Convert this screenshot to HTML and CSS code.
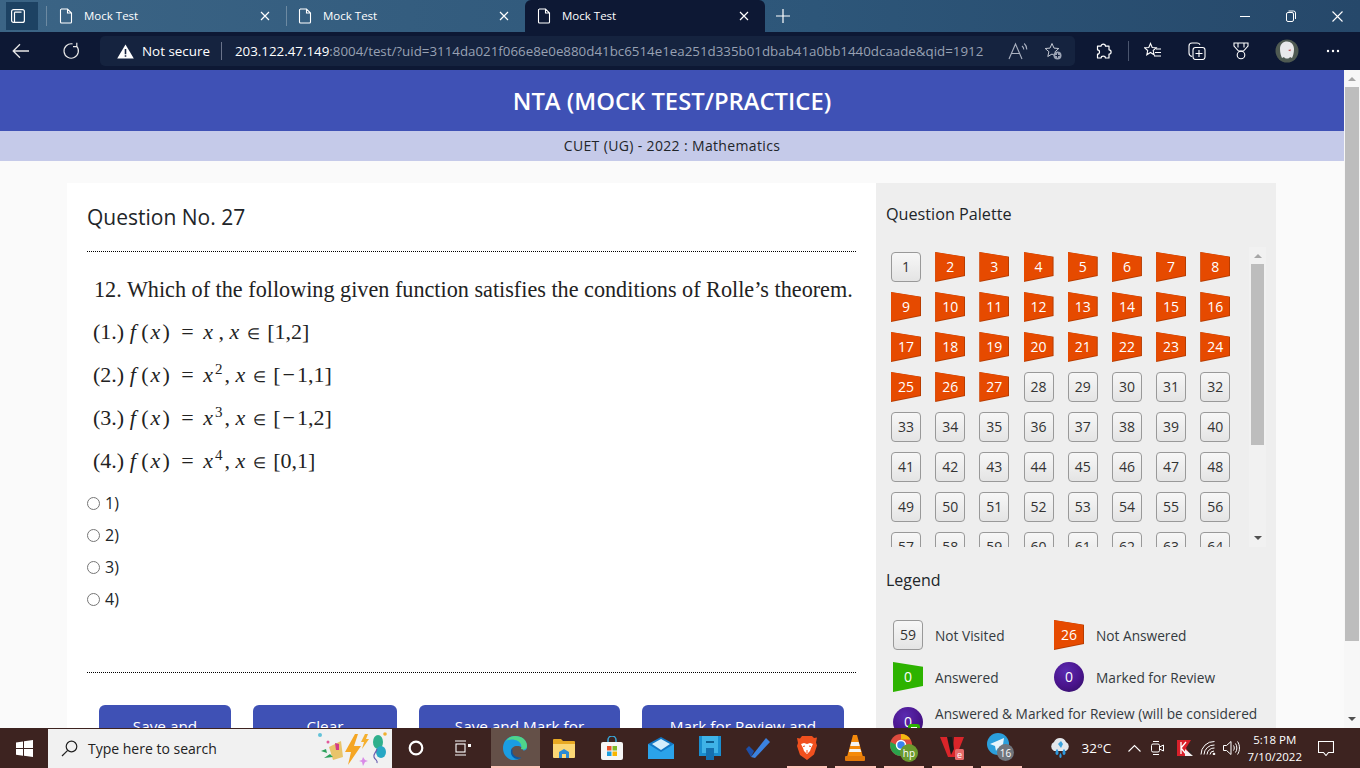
FILE: index.html
```html
<!DOCTYPE html>
<html>
<head>
  <meta charset="utf-8">
  <title>Mock Test</title>
  <link rel="stylesheet" href="styles.css">
</head>
<body>
  <div class="browser">
    <!-- Tab strip -->
    <div class="tabstrip">
      <div class="tab-toggle">
        <svg width="16" height="16" viewBox="0 0 16 16" fill="none" stroke="#fff" stroke-width="1.2"><rect x="1.6" y="1.6" width="12.8" height="12.8" rx="2"/><path d="M4.5 4.2h7M4.5 4.2v9.8"/></svg>
      </div>
      <span class="tab-sep"></span>
      <div class="tab">
        <svg class="tab-icon" width="14" height="16" viewBox="0 0 14 16" fill="none" stroke="#fff" stroke-width="1.1"><path d="M2 1h6.5L12.5 5v9a1 1 0 0 1-1 1h-9a1 1 0 0 1-1-1V2a1 1 0 0 1 1-1zM8.5 1v4h4"/></svg>
        <span class="tab-title">Mock Test</span>
        <svg class="tab-close" width="10" height="10" viewBox="0 0 10 10" stroke="#fff" stroke-width="1.2"><path d="M1 1l8 8M9 1l-8 8"/></svg>
      </div>
      <div class="tab tab-sepleft">
        <svg class="tab-icon" width="14" height="16" viewBox="0 0 14 16" fill="none" stroke="#fff" stroke-width="1.1"><path d="M2 1h6.5L12.5 5v9a1 1 0 0 1-1 1h-9a1 1 0 0 1-1-1V2a1 1 0 0 1 1-1zM8.5 1v4h4"/></svg>
        <span class="tab-title">Mock Test</span>
        <svg class="tab-close" width="10" height="10" viewBox="0 0 10 10" stroke="#fff" stroke-width="1.2"><path d="M1 1l8 8M9 1l-8 8"/></svg>
      </div>
      <div class="tab tab-active">
        <svg class="tab-icon" width="14" height="16" viewBox="0 0 14 16" fill="none" stroke="#fff" stroke-width="1.1"><path d="M2 1h6.5L12.5 5v9a1 1 0 0 1-1 1h-9a1 1 0 0 1-1-1V2a1 1 0 0 1 1-1zM8.5 1v4h4"/></svg>
        <span class="tab-title">Mock Test</span>
        <svg class="tab-close" width="10" height="10" viewBox="0 0 10 10" stroke="#fff" stroke-width="1.2"><path d="M1 1l8 8M9 1l-8 8"/></svg>
      </div>
      <svg class="tab-new" width="14" height="14" viewBox="0 0 14 14" stroke="#fff" stroke-width="1.2"><path d="M7 0v14M0 7h14"/></svg>
      <div class="window-btns">
        <div class="window-btn"><svg width="10" height="10" viewBox="0 0 10 10" stroke="#fff"><path d="M0 5.5h10"/></svg></div>
        <div class="window-btn"><svg width="10" height="12" viewBox="0 0 10 12" fill="none" stroke="#fff"><rect x="0.5" y="2.5" width="7" height="9" rx="1.5"/><path d="M2.5 1h5a2 2 0 0 1 2 2v6"/></svg></div>
        <div class="window-btn"><svg width="11" height="11" viewBox="0 0 11 11" stroke="#fff" stroke-width="1.1"><path d="M0.5 0.5l10 10M10.5 0.5l-10 10"/></svg></div>
      </div>
    </div>

    <!-- Toolbar -->
    <div class="toolbar">
      <div class="nav-btn">
        <svg width="18" height="16" viewBox="0 0 18 16" fill="none" stroke="#e8e8e8" stroke-width="1.3"><path d="M17 8H1.5M8 1.2L1.2 8 8 14.8"/></svg>
      </div>
      <div class="nav-btn">
        <svg width="18" height="18" viewBox="0 0 18 18" fill="none" stroke="#e8e8e8" stroke-width="1.2"><path d="M14.6 4.2A7.2 7.2 0 1 1 10.5 1.9M14.8 0.8v3.8h-3.8"/></svg>
      </div>
      <div class="address">
        <svg class="warn-icon" width="17" height="15" viewBox="0 0 17 15"><path d="M8.5 0.5L16.8 14.6H0.2z" fill="#fff"/><path d="M7.7 5h1.6v5.2H7.7zM7.7 11.2h1.6v1.6H7.7z" fill="#14213f"/></svg>
        <span class="not-secure">Not secure</span>
        <span class="addr-sep"></span>
        <span class="url"><b>203.122.47.149</b>:8004/test/?uid=3114da021f066e8e0e880d41bc6514e1ea251d335b01dbab41a0bb1440dcaade&amp;qid=1912</span>
        <svg class="addr-read" width="20" height="18" viewBox="0 0 20 18" fill="none" stroke="#aab1c0" stroke-width="1.1"><path d="M1 17L7.500 2 14 17M3.500 11.500h8M14 4c1.200 1 1.800 2.200 1.800 3.600M16.200 1.500c1.700 1.500 2.600 3.500 2.600 6"/></svg>
        <svg class="addr-fav" width="18" height="18" viewBox="0 0 18 18"><path d="M8 1.5l2 4.6 4.8.4-3.7 3.2 1.1 4.8L8 12l-4.2 2.5 1.1-4.8L1.2 6.5 6 6.100z" fill="none" stroke="#c5cad4" stroke-width="1"/><circle cx="13.500" cy="13.500" r="4" fill="#9ba3b4"/><path d="M13.500 11.300v4.400M11.300 13.500h4.400" stroke="#14213f"/></svg>
      </div>
      <div class="tool-icons">
        <svg class="ti-ext" width="17" height="17" viewBox="0 0 17 17" fill="none" stroke="#fff" stroke-width="1.2"><path d="M6 3.200c0-2.800 4.500-2.800 4.500 0h3.500v3.600c2.800 0 2.800 4.400 0 4.400V15h-3.600c0-2.500-4.300-2.500-4.300 0H2.500v-3.800c2.700 0 2.700-4.400 0-4.400V3.200z" stroke-linejoin="round"/></svg>
        <span class="tool-sep"></span>
        <svg class="ti-star" width="18" height="18" viewBox="0 0 18 18" fill="none" stroke="#fff" stroke-width="1.1"><path d="M6.500 1.500l1.700 4 4 .3-3 2.700.9 4.300-3.600-2.300-3.700 2.300.9-4.300-3-2.700 4.100-.3zM12 7h5M11 10.500h6M10 14h7"/></svg>
        <svg class="ti-coll" width="18" height="18" viewBox="0 0 18 18" fill="none" stroke="#fff" stroke-width="1.1"><path d="M4 14.500C2 14 1 13 1 11V4c0-2 1-3 3-3h5c1.500 0 2.500.6 3 1.800"/><rect x="5" y="5.500" width="12" height="12" rx="2.500"/><path d="M11 8v7M7.500 11.500h7"/></svg>
        <svg class="ti-medal" width="16" height="18" viewBox="0 0 16 18" fill="none" stroke="#fff" stroke-width="1.1"><path d="M1 1h14v3l-4.500 5h-5L1 4zM5 1v4.500M11 1v4.500"/><circle cx="8" cy="13" r="3.800"/></svg>
        <div class="avatar">
          <svg width="24" height="24" viewBox="0 0 24 24"><circle cx="12" cy="12" r="11.500" fill="#4f5a52"/><path d="M5 10c0-5 3-7.500 7-7.500s7 3 7 7.500c0 4-1 7-2 9l-2-1c-1 2-5 2-6 0l-2 1c-1-2-2-5-2-9z" fill="#e8e8ea"/><path d="M13 11l3-.6-.8 1.800z" fill="#b5383f"/></svg>
        </div>
        <svg class="ti-more" width="14" height="4" viewBox="0 0 14 4" fill="#fff"><circle cx="2" cy="2" r="1.200"/><circle cx="7" cy="2" r="1.200"/><circle cx="12" cy="2" r="1.200"/></svg>
      </div>
    </div>

    <!-- Page -->
    <div class="page">
      <div class="page-main">
        <div class="site-header">NTA (MOCK TEST/PRACTICE)</div>
        <div class="site-sub">CUET (UG) - 2022 : Mathematics</div>

        <div class="exam">
          <div class="question-panel">
            <div class="question-title">Question No. 27</div>
            <div class="question-body">
              <div class="q-line q-lead">12. Which of the following given function satisfies the conditions of Rolle’s theorem.</div>
              <div class="q-line">(1.) <i>f</i> <span class="arg">(<i>x</i>)</span> <span class="eq">=</span> <i>x</i> , <i>x</i> <span class="in">∈</span> [1,2]</div>
              <div class="q-line">(2.) <i>f</i> <span class="arg">(<i>x</i>)</span> <span class="eq">=</span> <i>x</i><sup>2</sup>, <i>x</i> <span class="in">∈</span> [<span class="minus">−</span>1,1]</div>
              <div class="q-line">(3.) <i>f</i> <span class="arg">(<i>x</i>)</span> <span class="eq">=</span> <i>x</i><sup>3</sup>, <i>x</i> <span class="in">∈</span> [<span class="minus">−</span>1,2]</div>
              <div class="q-line">(4.) <i>f</i> <span class="arg">(<i>x</i>)</span> <span class="eq">=</span> <i>x</i><sup>4</sup>, <i>x</i> <span class="in">∈</span> [0,1]</div>
            </div>
            <div class="options">
              <label class="option"><input type="radio" name="answer"> 1)</label>
              <label class="option"><input type="radio" name="answer"> 2)</label>
              <label class="option"><input type="radio" name="answer"> 3)</label>
              <label class="option"><input type="radio" name="answer"> 4)</label>
            </div>
            <div class="actions">
              <button class="action-btn btn-save">Save and Next</button>
              <button class="action-btn btn-clear">Clear Response</button>
              <button class="action-btn btn-mark">Save and Mark for Review</button>
              <button class="action-btn btn-review">Mark for Review and Next</button>
            </div>
          </div>

          <div class="palette-panel">
            <div class="palette-title">Question Palette</div>
            <div class="palette-box">
              <div class="palette-grid">
                <span class="qb">1</span>
                <span class="qb qb-red">2</span><span class="qb qb-red">3</span><span class="qb qb-red">4</span><span class="qb qb-red">5</span><span class="qb qb-red">6</span><span class="qb qb-red">7</span><span class="qb qb-red">8</span>
                <span class="qb qb-red">9</span><span class="qb qb-red">10</span><span class="qb qb-red">11</span><span class="qb qb-red">12</span><span class="qb qb-red">13</span><span class="qb qb-red">14</span><span class="qb qb-red">15</span><span class="qb qb-red">16</span>
                <span class="qb qb-red">17</span><span class="qb qb-red">18</span><span class="qb qb-red">19</span><span class="qb qb-red">20</span><span class="qb qb-red">21</span><span class="qb qb-red">22</span><span class="qb qb-red">23</span><span class="qb qb-red">24</span>
                <span class="qb qb-red">25</span><span class="qb qb-red">26</span><span class="qb qb-red">27</span><span class="qb">28</span><span class="qb">29</span><span class="qb">30</span><span class="qb">31</span><span class="qb">32</span>
                <span class="qb">33</span><span class="qb">34</span><span class="qb">35</span><span class="qb">36</span><span class="qb">37</span><span class="qb">38</span><span class="qb">39</span><span class="qb">40</span>
                <span class="qb">41</span><span class="qb">42</span><span class="qb">43</span><span class="qb">44</span><span class="qb">45</span><span class="qb">46</span><span class="qb">47</span><span class="qb">48</span>
                <span class="qb">49</span><span class="qb">50</span><span class="qb">51</span><span class="qb">52</span><span class="qb">53</span><span class="qb">54</span><span class="qb">55</span><span class="qb">56</span>
                <span class="qb">57</span><span class="qb">58</span><span class="qb">59</span><span class="qb">60</span><span class="qb">61</span><span class="qb">62</span><span class="qb">63</span><span class="qb">64</span>
              </div>
              <div class="scrollbar palette-scroll">
                <span class="arrow-up"></span>
                <div class="scroll-track"><div class="palette-thumb"></div></div>
                <span class="arrow-down"></span>
              </div>
            </div>

            <div class="legend-title">Legend</div>
            <div class="legend">
              <div class="legend-item"><span class="qb">59</span><span>Not Visited</span></div>
              <div class="legend-item"><span class="qb qb-red">26</span><span>Not Answered</span></div>
              <div class="legend-item"><span class="qb qb-green">0</span><span>Answered</span></div>
              <div class="legend-item"><span class="qb qb-purple">0</span><span>Marked for Review</span></div>
              <div class="legend-item legend-wide">
                <span class="qb qb-purple qb-tick">0</span>
                <span>Answered &amp; Marked for Review (will be considered for evaluation)</span>
              </div>
            </div>
          </div>
        </div>
      </div>
      <div class="scrollbar page-scroll">
        <span class="arrow-up"></span>
        <div class="scroll-track"><div class="page-thumb"></div></div>
        <span class="arrow-down"></span>
      </div>
    </div>

    <!-- Windows taskbar -->
    <div class="taskbar">
      <div class="start">
        <svg width="17" height="17" viewBox="0 0 17 17" fill="#fff"><path d="M0 2.400l7-1v6.700H0zM8 1.300l9-1.300v8.100H8zM0 9h7v6.700l-7-1zM8 9h9v8l-9-1.300z"/></svg>
      </div>
      <div class="search">
        <svg width="17" height="17" viewBox="0 0 17 17" fill="none" stroke="#222" stroke-width="1.200"><circle cx="10.500" cy="6.500" r="5.300"/><path d="M6.700 10.300L1 16"/></svg>
        <span class="search-text">Type here to search</span>
        <svg class="search-art" width="70" height="36" viewBox="0 0 70 36">
          <path d="M11 16l12-6 2 16-10 3z" fill="#e9c46a"/>
          <path d="M9 22l-6-2 5-2zM15 26l-9 1 6-4z" fill="#2aa05a"/>
          <path d="M17 12l4 1 0 6-3 0z" fill="#d23a8a"/>
          <circle cx="2" cy="4" r="2" fill="#62c2d8"/><circle cx="10" cy="11" r="1.500" fill="#e25a9a"/>
          <path d="M37 3L27 21h6l-3 13 13-19h-7l4-12z" fill="#f5a623"/>
          <path d="M47 3l-4 8h3l-2 7 7-10h-3l2-5z" fill="#f5b02e"/>
          <ellipse cx="60" cy="11" rx="5" ry="7" fill="#2fb08c"/>
          <ellipse cx="63" cy="21" rx="5" ry="6" fill="#27a7c4"/>
          <path d="M59 18c-1 4-4 5-3 8s4 3 3 6" fill="none" stroke="#6a5fb0" stroke-width="1.200"/>
          <circle cx="67" cy="3" r="1.800" fill="#f0b030"/>
          <path d="M45 26l2 3 3 1-3 1-2 4-1-4-3-1 3-1z" fill="#d98be8"/>
        </svg>
      </div>
      <div class="task-btn task-cortana"><svg width="16" height="16" viewBox="0 0 16 16" fill="none" stroke="#fff" stroke-width="2.200"><circle cx="8" cy="8" r="6.300"/></svg></div>
      <div class="task-btn task-view"><svg width="16" height="16" viewBox="0 0 16 16" fill="none" stroke="#fff" stroke-width="1.100"><path d="M0 1h11M0 15h11"/><rect x="1" y="4" width="9" height="8"/><rect x="13" y="4" width="3" height="3" fill="#fff" stroke="none"/></svg></div>
      <div class="app app-edge app-on">
        <svg width="26" height="26" viewBox="0 0 26 26"><path d="M13 1C6 1 1 6 1 13c0 7 5 12 11 12 3 0 5-1 7-2-5 1-10-2-10-7 0-3 3-5 6-5 4 0 6 2 6 4 0 1 4 1 4-3C25 5 20 1 13 1z" fill="#1b9de2"/><path d="M13 1C9 1 6 3 4 6c3-2 8-2 12 0 3 2 4 5 3 8 3 1 6 0 6-3C25 5 20 1 13 1z" fill="#4fd58a"/><path d="M9 15c-1 6 4 11 10 8 1-1-4 0-6-2-3-2-3-5-2-7z" fill="#0c59a4"/></svg>
      </div>
      <div class="app">
        <svg width="22" height="20" viewBox="0 0 22 20"><path d="M0 2a1 1 0 0 1 1-1h7l2 2h11a1 1 0 0 1 1 1v15H0z" fill="#e8a923"/><path d="M0 6h22v13a1 1 0 0 1-1 1H1a1 1 0 0 1-1-1z" fill="#fbd775"/><path d="M6 20v-6l5-3 5 3v6h-3v-4H9v4z" fill="#2a8ad4"/></svg>
      </div>
      <div class="app">
        <svg width="22" height="24" viewBox="0 0 22 24"><path d="M7 7V4a4 4 0 0 1 8 0v3" fill="none" stroke="#39a6d8" stroke-width="1.500"/><rect x="0" y="6" width="22" height="18" rx="2" fill="#f6f6f6"/><rect x="6" y="10" width="4.500" height="4.500" fill="#e8502a"/><rect x="11.500" y="10" width="4.500" height="4.500" fill="#7fba28"/><rect x="6" y="15.500" width="4.500" height="4.500" fill="#1c9fe0"/><rect x="11.500" y="15.500" width="4.500" height="4.500" fill="#f8b600"/></svg>
      </div>
      <div class="app">
        <svg width="26" height="22" viewBox="0 0 26 22"><path d="M13 0L0 7v15h26V7z" fill="#1277c4"/><path d="M0 7l13 8 13-8v15H0z" fill="#2ba3ea"/><path d="M4 7l9-5 9 5-9 6z" fill="#d4eefc"/></svg>
      </div>
      <div class="app">
        <svg width="22" height="28" viewBox="0 0 22 28"><rect x="0" y="2" width="22" height="20" fill="#1a8ed0"/><rect x="3" y="2" width="16" height="17" fill="#3fb3e8"/><rect x="7" y="7" width="8" height="2" fill="#0f5f92"/><path d="M7 14h8v12H7z" fill="#1570b0"/></svg>
      </div>
      <div class="app">
        <svg width="24" height="20" viewBox="0 0 24 20"><path d="M0 11l3-3 5 5-3 6z" fill="#1d4fa8"/><path d="M5 19L20 0l4 4L9 20z" fill="#3b82e0"/></svg>
      </div>
      <div class="app app-on">
        <svg width="20" height="24" viewBox="0 0 20 24"><path d="M5 0h10l2 2 3-.500-1 5 1 3-3 9-7 5.500L3 19 0 10l1-3-1-5 3 .500z" fill="#f0501e"/><path d="M4 8l3-1 3 1 3-1 3 1-2 4-1 3-3 3-3-3-1-3z" fill="#fff"/><path d="M8 10l-2 .500M12 10l2 .500M10 14v3" stroke="#f0501e" stroke-width="1"/></svg>
      </div>
      <div class="app app-on">
        <svg width="20" height="26" viewBox="0 0 20 26"><path d="M8 0h4l6 22H2z" fill="#f58a0b"/><path d="M6.300 7h7.400l1 4H5.300zM4.700 14h10.600l1 3H3.900z" fill="#f4f4f4"/><rect x="0" y="21" width="20" height="5" rx="1" fill="#e37a0a"/></svg>
      </div>
      <div class="app app-on">
        <svg width="30" height="30" viewBox="0 0 30 30"><circle cx="12" cy="12" r="11" fill="#dd4b3e"/><path d="M12 1a11 11 0 0 1 9.500 5.500H12z" fill="#f2b90f"/><path d="M1.500 9A11 11 0 0 0 11 23l5-7z" fill="#2ba24c"/><circle cx="12" cy="12" r="4.500" fill="#3b82f0" stroke="#fff" stroke-width="1.500"/><circle cx="20" cy="20" r="9" fill="#6b9a2e"/><text x="20" y="24" class="svg-badge">hp</text></svg>
      </div>
      <div class="app app-on">
        <svg width="26" height="26" viewBox="0 0 26 26"><path d="M0 2h9l4 12 1-12h10l-8 20h-8z" fill="#d9252a"/><path d="M7 2h5l2 12-3 6z" fill="#1a1a1a"/><rect x="15" y="14" width="9" height="11" rx="1.500" fill="#e66a6a"/><text x="19.500" y="23" class="svg-badge-e">e</text></svg>
      </div>
      <div class="app app-on">
        <svg width="30" height="30" viewBox="0 0 30 30"><circle cx="12" cy="11" r="11" fill="#2b9fdc"/><path d="M4 11l14-6-2 13-4-3-2 3-1-5z" fill="#e8f4fb"/><circle cx="19.500" cy="19.500" r="8.500" fill="#70757c"/><text x="19.500" y="23.500" class="svg-count">16</text></svg>
      </div>
      <div class="tray">
        <svg class="tray-weather" width="24" height="22" viewBox="0 0 24 22"><path d="M6 14a5 5 0 0 1 0-9 6.500 6.500 0 0 1 12 0 5 5 0 0 1 0 9z" fill="#e4e8ec"/><path d="M10 7l3-3 2 3-2 4z" fill="#3aa3de"/><path d="M9 12c2 2 2 6 0 6s-2-4 0-6zM16 12c2 2 2 6 0 6s-2-4 0-6zM12.500 16c1.500 1.500 1.500 5 0 5s-1.500-3.500 0-5z" fill="#2e9be0"/></svg>
        <span class="tray-temp">32°C</span>
        <svg class="tray-up" width="13" height="8" viewBox="0 0 13 8" fill="none" stroke="#fff" stroke-width="1.100"><path d="M0.500 7.500l6-6 6 6"/></svg>
        <svg class="tray-meet" width="13" height="16" viewBox="0 0 13 16" fill="none" stroke="#fff" stroke-width="1"><path d="M2 1.500h6M2 14.500h6"/><rect x="0.500" y="4" width="8" height="8" rx="1.500"/><path d="M8.500 7l4-2v6l-4-2"/></svg>
        <svg class="tray-av" width="16" height="16" viewBox="0 0 16 16"><path d="M0 0h14l-5 8 5 8H0z" fill="#d9202a"/><path d="M4 2v12M4 8l5-6M4 8l5 6" stroke="#fff" stroke-width="1.300" fill="none"/><path d="M8 9l8 7H8z" fill="#f2f2f2"/><path d="M11 9.500l4 4" stroke="#222"/></svg>
        <svg class="tray-wifi" width="16" height="14" viewBox="0 0 16 14" fill="none" stroke="#fff" stroke-width="1"><path d="M1 13.500A13 13 0 0 1 14.500 0.500M4 13.500A10 10 0 0 1 14.500 4M7 13.500a7 7 0 0 1 7.500-6.500M10 13.500a4 4 0 0 1 4-3.500"/><circle cx="14" cy="13" r="0.900" fill="#fff"/></svg>
        <svg class="tray-vol" width="17" height="16" viewBox="0 0 17 16" fill="none" stroke="#fff" stroke-width="1"><path d="M0.500 5.500h3L8 1.500v13l-4.500-4h-3zM10.500 5.500c1 1.500 1 3.500 0 5M12.500 3.500c1.800 2.500 1.800 6.500 0 9M14.500 1.500c2.600 3.500 2.600 9.500 0 13"/></svg>
        <div class="tray-clock"><span>5:18 PM</span><span>7/10/2022</span></div>
        <svg class="tray-note" width="16" height="15" viewBox="0 0 16 15" fill="none" stroke="#fff" stroke-width="1.100"><path d="M0.500 0.500h15v11h-5l-2.500 3-2.500-3h-5z"/></svg>
      </div>
    </div>
  </div>
</body>
</html>
```

FILE: styles.css
```css
html, body {
  margin: 0;
  height: 100%;
  overflow: hidden;
}

body {
  font-family: "Open Sans", sans-serif;
  color: #212529;
}

.browser {
  display: flex;
  flex-direction: column;
  height: 768px;
}

/* Tab strip */
.tabstrip {
  height: 32px;
  flex: none;
  display: flex;
  align-items: flex-end;
  background: linear-gradient(90deg, #3b6485, #2d5679 60%, #26486a);
  color: #fff;
  font-size: 12px;
}

.tab-toggle {
  width: 32px;
  height: 28px;
  margin: 0 0 2px 6px;
  background: #1d4263;
  display: flex;
  align-items: center;
  justify-content: center;
  box-sizing: border-box;
  padding-right: 8px;
}

.tab-sep {
  width: 1px;
  height: 20px;
  margin: 0 0 6px 8px;
  background: #6d8aa2;
}

.tab {
  width: 239px;
  height: 32px;
  flex: none;
  display: flex;
  align-items: center;
  box-sizing: border-box;
  padding: 0 16px 0 12px;
  position: relative;
}

.tab-sepleft::before {
  content: "";
  position: absolute;
  left: 0;
  top: 6px;
  height: 20px;
  width: 1px;
  background: #6d8aa2;
}

.tab-active {
  width: 240px;
  background: #0d1834;
  border-radius: 6px 6px 0 0;
}

.tab-icon {
  margin-right: 11px;
}

.tab-title {
  flex: 1;
  font-size: 11.5px;
  padding-bottom: 2px;
}

.tab-new {
  margin: 0 0 9px 11px;
}

.window-btns {
  margin-left: auto;
  display: flex;
  align-self: stretch;
}

.window-btn {
  width: 46px;
  display: flex;
  align-items: center;
  justify-content: center;
}

/* Toolbar */
.toolbar {
  height: 38px;
  flex: none;
  display: flex;
  align-items: center;
  background: #0d1834;
  color: #fff;
}

.nav-btn {
  width: 36px;
  height: 30px;
  margin-left: 3px;
  margin-right: 15px;
  display: flex;
  align-items: center;
  justify-content: center;
}

.nav-btn + .nav-btn {
  margin: 0 12px 0 0;
  width: 34px;
}

.address {
  width: 975px;
  height: 30px;
  flex: none;
  display: flex;
  align-items: center;
  box-sizing: border-box;
  padding-left: 17px;
  background: #15233f;
  border-radius: 5px;
  font-size: 14px;
}

.not-secure {
  margin-left: 8px;
  font-size: 13.4px;
}

.addr-sep {
  width: 1px;
  height: 18px;
  margin: 0 13px 0 11px;
  background: #69738a;
}

.url {
  color: #98a1b3;
  font-size: 13.33px;
  white-space: nowrap;
}

.url b {
  color: #fff;
  font-weight: 400;
}

.addr-read {
  margin-left: auto;
}

.addr-fav {
  margin: 0 13px 0 16px;
}

.tool-icons {
  flex: 1;
  display: flex;
  align-items: center;
}

.ti-ext {
  margin-left: 20px;
}

.tool-sep {
  width: 1px;
  height: 20px;
  margin: 0 15px 0 16px;
  background: #4a556e;
}

.ti-coll {
  margin-left: 26px;
}

.ti-medal {
  margin-left: 27px;
}

.avatar {
  margin-left: 26px;
  height: 24px;
}

.ti-more {
  margin-left: 27px;
}

/* Page */
.page {
  flex: 1;
  min-height: 0;
  display: flex;
  background: #fafafa;
  overflow: hidden;
}

.page-main {
  flex: 1;
  min-width: 0;
  overflow: hidden;
}

.site-header {
  height: 61px;
  line-height: 62px;
  background: #3f51b5;
  color: #fff;
  text-align: center;
  font-size: 23.8px;
  font-weight: 600;
}

.site-sub {
  height: 30px;
  line-height: 30px;
  background: #c5cae9;
  text-align: center;
  font-size: 14px;
  letter-spacing: 0.35px;
}

.exam {
  display: flex;
  width: 1209px;
  margin: 22px 0 0 67px;
}

.question-panel {
  width: 809px;
  flex: none;
  box-sizing: border-box;
  padding: 0 20px;
  background: #fff;
}

.question-title {
  height: 68px;
  line-height: 68px;
  font-size: 21px;
  border-bottom: 1px dotted #000;
}

.question-body {
  margin-top: 16px;
  padding-left: 6px;
  font-family: "Liberation Serif", serif;
  font-size: 22px;
  color: #222;
}

.q-line {
  height: 43px;
  line-height: 42px;
  white-space: nowrap;
}

.q-lead {
  padding-left: 1px;
  font-size: 22.2px;
  line-height: 43px;
}

.q-line sup {
  font-size: 15px;
  line-height: 0;
  margin: 0 2px;
}

.arg {
  letter-spacing: 2px;
}

.eq {
  margin: 0 4px;
}

.in {
  font-size: 15px;
  margin: 0 2px;
}

.minus {
  margin: 0 2px;
}

.options {
  margin-top: 4px;
  padding-bottom: 57px;
  border-bottom: 1px dotted #000;
}

.option {
  display: flex;
  align-items: center;
  height: 32px;
  font-size: 16px;
  gap: 5px;
}

.option input {
  margin: 0;
}

.actions {
  display: flex;
  align-items: flex-start;
  gap: 22px;
  margin: 32px 0 0 12px;
}

.action-btn {
  padding: 10px 24px;
  border: 0;
  border-radius: 6px;
  background: #3f51b5;
  color: #fff;
  font: 15.3px/22px "Open Sans", sans-serif;
  flex: none;
}

.btn-save { width: 132px; }
.btn-clear { width: 144px; }
.btn-mark { width: 201px; padding-left: 20px; padding-right: 20px; }
.btn-review { width: 202px; padding-left: 20px; padding-right: 20px; }

/* Palette */
.palette-panel {
  flex: 1;
  background: #eee;
  padding-left: 10px;
  box-sizing: border-box;
  height: 600px;
}

.palette-title {
  height: 64px;
  line-height: 62px;
  font-size: 16.2px;
}

.palette-box {
  display: flex;
  width: 380px;
  height: 300px;
}

.palette-grid {
  width: 363px;
  flex: none;
  height: 300px;
  box-sizing: border-box;
  padding: 5px;
  overflow: hidden;
  display: grid;
  grid-template-columns: repeat(8, 30px);
  grid-auto-rows: 30px;
  column-gap: 14.2px;
  row-gap: 10px;
}

.qb {
  width: 30px;
  height: 30px;
  flex: none;
  box-sizing: border-box;
  display: flex;
  align-items: center;
  justify-content: center;
  padding-bottom: 1px;
  font-size: 14px;
  color: #333;
  border: 1px solid #999;
  border-radius: 4px;
  background: linear-gradient(#f7f7f7, #e4e4e4);
}

/* flag shape: dark clip behind, orange clip inset 1px gives the edge */
.qb-red {
  border: 0;
  border-radius: 0;
  color: #fff;
  background: #b83c00;
  clip-path: polygon(0 0, 100% 16%, 100% 80%, 0 100%);
  position: relative;
}

.qb-red::before {
  content: "";
  position: absolute;
  inset: 0 1px 1px 0;
  z-index: -1;
  background: #e64a00;
  clip-path: polygon(0 0, 100% 16%, 100% 80%, 0 100%);
}

.qb-green {
  border: 0;
  border-radius: 0;
  color: #fff;
  background: #2db300;
  clip-path: polygon(0 0, 100% 16%, 100% 80%, 0 100%);
}

.qb-purple {
  border: 0;
  border-radius: 50%;
  color: #fff;
  background: radial-gradient(circle at 40% 30%, #5a2ab0, #4a148c 55%, #2c0e5e);
}

.qb-tick {
  position: relative;
}

.qb-tick::after {
  content: "";
  position: absolute;
  right: 3px;
  bottom: 3px;
  width: 12px;
  height: 10px;
  background: #fff;
  border: 3px solid #2db300;
  border-radius: 3px;
  box-sizing: border-box;
}

/* Fake scrollbars */
.scrollbar {
  display: flex;
  flex-direction: column;
  align-items: center;
  flex: none;
  box-sizing: border-box;
}

.scroll-track {
  flex: 1;
  width: 100%;
  box-sizing: border-box;
}

.palette-scroll {
  width: 17px;
  height: 300px;
  background: #f1f1f1;
}

.palette-scroll .scroll-track {
  padding: 0 2px;
}

.palette-scroll .arrow-up {
  margin: 7px 0 6px;
}

.palette-scroll .arrow-down {
  margin: 6px 0 7px;
}

.palette-thumb {
  height: 181px;
  background: #bdbdbd;
}

.page-scroll {
  width: 16px;
  background: #f7f7f7;
}

.page-scroll .scroll-track {
  padding: 0 1px;
}

.page-scroll .arrow-up {
  margin: 7px 0 6px;
}

.page-scroll .arrow-down {
  margin: 6px 0 7px;
}

.page-thumb {
  height: 554px;
  background: #bdbdbd;
}

.arrow-up,
.arrow-down {
  width: 0;
  height: 0;
  border-left: 4px solid transparent;
  border-right: 4px solid transparent;
}

.arrow-up {
  border-bottom: 4px solid #a6a6a6;
}

.arrow-down {
  border-top: 4px solid #505050;
}

/* Legend */
.legend-title {
  height: 66px;
  padding-top: 16px;
  box-sizing: border-box;
  line-height: 34px;
  font-size: 16px;
}

.legend {
  display: grid;
  grid-template-columns: 161px 190px;
  row-gap: 12px;
  margin: 7px 0 0 7px;
  font-size: 13.7px;
  color: #343a40;
}

.legend-item {
  display: flex;
  align-items: center;
  gap: 12px;
}

.legend-wide {
  grid-column: 1 / 3;
  align-items: flex-start;
  width: 372px;
  line-height: 20px;
}

.legend-wide .qb {
  margin-top: 3px;
}

/* Taskbar */
.taskbar {
  height: 40px;
  flex: none;
  display: flex;
  align-items: center;
  background: #3d2320;
  color: #fff;
  position: relative;
}

.start {
  width: 48px;
  height: 40px;
  flex: none;
  display: flex;
  align-items: center;
  justify-content: center;
}

.search {
  width: 344px;
  height: 39px;
  margin-top: 1px;
  flex: none;
  display: flex;
  align-items: center;
  box-sizing: border-box;
  padding: 0 4px 0 13px;
  background: #f1f1f1;
  color: #222;
  font-size: 14px;
}

.search-text {
  margin-left: 10px;
}

.search-art {
  margin-left: auto;
}

.task-btn {
  width: 48px;
  height: 40px;
  flex: none;
  display: flex;
  align-items: center;
  justify-content: center;
}

.task-view {
  margin-right: 5px;
  width: 46px;
}

.app {
  width: 48.6px;
  height: 40px;
  flex: none;
  display: flex;
  align-items: center;
  justify-content: center;
  position: relative;
}

.app-on::after {
  content: "";
  position: absolute;
  left: 4px;
  right: 4px;
  bottom: 0;
  height: 2px;
  background: #ffc4ba;
}

.app-edge {
  background: #645048;
}

.app-edge::after {
  left: 0;
  right: 0;
}

.svg-badge {
  font: 10px "Open Sans", sans-serif;
  fill: #fff;
  text-anchor: middle;
}

.svg-badge-e {
  font: 9px "Open Sans", sans-serif;
  fill: #fff;
  text-anchor: middle;
}

.svg-count {
  font: 10px "Open Sans", sans-serif;
  fill: #fff;
  text-anchor: middle;
}

.tray {
  flex: 1;
  display: flex;
  align-items: center;
  font-size: 13.5px;
}

.tray-weather {
  margin-left: 22px;
}

.tray-temp {
  margin-left: 10px;
  white-space: nowrap;
}

.tray-up {
  margin-left: 17px;
}

.tray-meet {
  margin-left: 10px;
}

.tray-av {
  margin-left: 13px;
}

.tray-wifi {
  margin-left: 7px;
}

.tray-vol {
  margin-left: 7px;
}

.tray-clock {
  width: 64px;
  margin-left: 2.5px;
  display: flex;
  flex-direction: column;
  align-items: center;
  font-size: 11.5px;
  line-height: 17px;
}

.tray-note {
  margin-left: 11px;
}
```
